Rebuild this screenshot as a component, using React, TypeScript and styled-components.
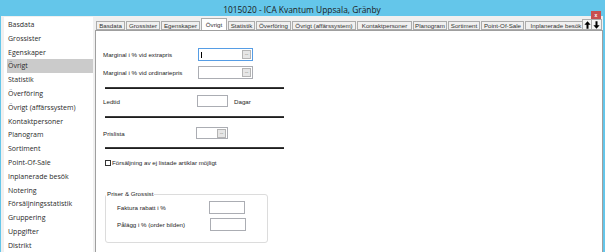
import * as React from "react";
import styled, { createGlobalStyle } from "styled-components";

const fonts = {
  ui: `"Open Sans", "Noto Sans", sans-serif`,
  form: `"Liberation Sans", Arial, sans-serif`
};

const sky = "#64c6ea";

const GlobalStyle = createGlobalStyle`
  html, body {
    margin: 0;
    padding: 0;
    background: #f0f0f0;
  }
  body {
    width: 605px;
    height: 252px;
    overflow: hidden;
  }
`;

const Window = styled.div`
  box-sizing: border-box;
  width: 605px;
  height: 252px;
  display: flex;
  flex-direction: column;
  background: #f0f0f0;
  border-left: 1px solid ${sky};
  border-right: 2px solid ${sky};
  overflow: hidden;
`;

const TitleBar = styled.div`
  flex: none;
  height: 16px;
  background: ${sky};
  display: grid;
  grid-template-columns: 1fr auto 1fr;
  align-items: start;
`;

const Title = styled.div`
  grid-column: 2;
  padding-top: 6px;
  font: 8.4px/1 ${fonts.ui};
  color: #1b1b1b;
  white-space: nowrap;
`;

const CloseButton = styled.div`
  grid-column: 3;
  justify-self: end;
  position: relative;
  z-index: 2;
  width: 10px;
  height: 8px;
  margin: 11px 2px 0 0;
  background: #c75050;
  display: flex;
  align-items: center;
  justify-content: center;
  color: #fff;
  font: bold 5px/1 ${fonts.form};
`;

const Body = styled.div`
  flex: 1;
  min-height: 0;
  display: flex;
  padding-top: 1px;
`;

const Sidebar = styled.ul`
  flex: none;
  width: 89px;
  margin: 0 0 0 3px;
  padding: 1px 0 0;
  list-style: none;
  background: #fff;
`;

const SideItem = styled.li<{ $active?: boolean }>`
  height: 13.8px;
  margin-left: 3px;
  padding-left: 1px;
  font: 7px/13.8px ${fonts.ui};
  color: #2a2a2a;
  white-space: nowrap;
  background: ${(p) => (p.$active ? "#cbcbcb" : "transparent")};
`;

const Content = styled.div`
  flex: 1;
  min-width: 0;
  margin-left: 2px;
  display: flex;
  flex-direction: column;
`;

const TabStrip = styled.div`
  flex: none;
  height: 13px;
  display: flex;
  align-items: flex-end;
  padding-left: 1px;
`;

const TabList = styled.div`
  flex: 1;
  min-width: 0;
  display: flex;
  align-items: flex-end;
  gap: 1px;
  overflow: hidden;
`;

const Tab = styled.div<{ $w: number; $active?: boolean }>`
  flex: none;
  box-sizing: border-box;
  width: ${(p) => p.$w}px;
  height: ${(p) => (p.$active ? 13 : 9)}px;
  border: 1px solid #acacac;
  border-bottom: ${(p) => (p.$active ? "none" : "1px solid #acacac")};
  background: ${(p) => (p.$active ? "#fff" : "#f0f0f0")};
  font: 6.2px/7px ${fonts.form};
  color: #333;
  text-align: center;
  white-space: nowrap;
  overflow: hidden;
  padding-top: ${(p) => (p.$active ? 2 : 0)}px;
  position: ${(p) => (p.$active ? "relative" : "static")};
  z-index: 1;
  margin-bottom: ${(p) => (p.$active ? -1 : 0)}px;
`;

const Scrollers = styled.div`
  flex: none;
  display: flex;
  margin-right: 1px;
`;

const ScrollButton = styled.div`
  box-sizing: border-box;
  width: 10px;
  height: 11px;
  border: 1px solid #adadad;
  background: #f4f4f4;
  display: flex;
  align-items: center;
  justify-content: center;
  & + & {
    border-left: none;
  }
`;

const Panel = styled.div`
  flex: 1;
  background: #fff;
  border: 1px solid #9f9f9f;
  border-bottom: none;
  padding: 17px 0 0 7px;
  font: 6.2px/7px ${fonts.form};
  color: #1e1e1e;
`;

const FieldRow = styled.div<{ $label: number; $top: number }>`
  display: grid;
  grid-template-columns: ${(p) => p.$label}px auto auto;
  align-items: center;
  justify-content: start;
  margin-top: ${(p) => p.$top}px;
`;

const Label = styled.span`
  white-space: nowrap;
`;

const TextBox = styled.div<{ $w: number; $h: number; $focused?: boolean }>`
  box-sizing: border-box;
  width: ${(p) => p.$w}px;
  height: ${(p) => p.$h}px;
  border: 1px solid ${(p) => (p.$focused ? "#569de5" : "#abadb3")};
  background: #fff;
  display: flex;
  align-items: center;
  justify-content: space-between;
  padding: 0 1px 0 2px;
`;

const Caret = styled.span`
  width: 1px;
  height: 6px;
  background: #000;
`;

const Ellipsis = styled.span`
  box-sizing: border-box;
  margin-left: auto;
  width: 9px;
  height: 9px;
  border: 1px solid #b4b4b4;
  background: #e6e6e6;
  color: #555;
  font: 5px/5px ${fonts.form};
  text-align: center;
  letter-spacing: -0.3px;
`;

const Suffix = styled.span`
  margin-left: 6px;
`;

const Rule = styled.div<{ $top: number }>`
  width: 179px;
  height: 2px;
  margin: ${(p) => p.$top}px 0 0 2px;
  background: linear-gradient(#4a4a4a, #0f0f0f);
`;

const CheckRow = styled.label<{ $top: number }>`
  display: flex;
  align-items: center;
  gap: 1px;
  height: 7px;
  margin: ${(p) => p.$top}px 0 0 2px;
`;

const CheckBox = styled.span`
  box-sizing: border-box;
  width: 6px;
  height: 6px;
  border: 1px solid #333;
  background: #fff;
`;

const Group = styled.fieldset`
  box-sizing: border-box;
  width: 163px;
  min-inline-size: 0;
  margin: 24px 0 0 2px;
  padding: 3px 0 11px 11px;
  border: 1px solid #dcdcdc;
  border-radius: 3px;
`;

const Legend = styled.legend`
  margin-left: -11px;
  padding: 0 1px;
  font: 6.2px/8px ${fonts.form};
  color: #222;
`;

const ArrowIcon = ({ down }: { down?: boolean }) => (
  <svg width="7" height="8" viewBox="0 0 7 8">
    <path
      d="M3.5 0.3 L0.4 3.8 H2.5 V7.8 H4.5 V3.8 H6.6 Z"
      fill="#000"
      transform={down ? "rotate(180 3.5 4)" : undefined}
    />
  </svg>
);

const sideItems = [
  "Basdata",
  "Grossister",
  "Egenskaper",
  "Övrigt",
  "Statistik",
  "Överföring",
  "Övrigt (affärssystem)",
  "Kontaktpersoner",
  "Planogram",
  "Sortiment",
  "Point-Of-Sale",
  "Inplanerade besök",
  "Notering",
  "Försäljningsstatistik",
  "Gruppering",
  "Uppgifter",
  "Distrikt"
];

const tabs: [string, number][] = [
  ["Basdata", 29],
  ["Grossister", 34],
  ["Egenskaper", 39],
  ["Övrigt", 26],
  ["Statistik", 27],
  ["Överföring", 35],
  ["Övrigt (affärssystem)", 64],
  ["Kontaktpersoner", 55],
  ["Planogram", 34],
  ["Sortiment", 32],
  ["Point-Of-Sale", 43],
  ["Inplanerade besök", 62]
];

const App = () => (
  <>
    <GlobalStyle />
    <Window>
      <TitleBar>
        <Title>1015020 - ICA Kvantum Uppsala, Gränby</Title>
        <CloseButton>x</CloseButton>
      </TitleBar>
      <Body>
        <Sidebar>
          {sideItems.map((s) => (
            <SideItem key={s} $active={s === "Övrigt"}>
              {s}
            </SideItem>
          ))}
        </Sidebar>
        <Content>
          <TabStrip>
            <TabList>
              {tabs.map(([t, w]) => (
                <Tab key={t} $w={w} $active={t === "Övrigt"}>
                  {t}
                </Tab>
              ))}
            </TabList>
            <Scrollers>
              <ScrollButton>
                <ArrowIcon />
              </ScrollButton>
              <ScrollButton>
                <ArrowIcon down />
              </ScrollButton>
            </Scrollers>
          </TabStrip>
          <Panel>
            <FieldRow $label={95} $top={0}>
              <Label>Marginal i % vid extrapris</Label>
              <TextBox $w={55} $h={13} $focused>
                <Caret />
                <Ellipsis>...</Ellipsis>
              </TextBox>
            </FieldRow>
            <FieldRow $label={95} $top={5}>
              <Label>Marginal i % vid ordinariepris</Label>
              <TextBox $w={55} $h={13}>
                <Ellipsis>...</Ellipsis>
              </TextBox>
            </FieldRow>
            <Rule $top={8} />
            <FieldRow $label={94} $top={6}>
              <Label>Ledtid</Label>
              <TextBox $w={31} $h={12} />
              <Suffix>Dagar</Suffix>
            </FieldRow>
            <Rule $top={9} />
            <FieldRow $label={93} $top={9}>
              <Label>Prislista</Label>
              <TextBox $w={32} $h={12}>
                <Ellipsis>...</Ellipsis>
              </TextBox>
            </FieldRow>
            <Rule $top={8} />
            <CheckRow $top={10}>
              <CheckBox />
              <span>Försäljning av ej listade artiklar möjligt</span>
            </CheckRow>
            <Group>
              <Legend>Priser &amp; Grossist</Legend>
              <FieldRow $label={92} $top={0}>
                <Label>Faktura rabatt i %</Label>
                <TextBox $w={36} $h={13} />
              </FieldRow>
              <FieldRow $label={93} $top={4}>
                <Label>Pålägg i % (order bilden)</Label>
                <TextBox $w={36} $h={13} />
              </FieldRow>
            </Group>
          </Panel>
        </Content>
      </Body>
    </Window>
  </>
);

export default App;
